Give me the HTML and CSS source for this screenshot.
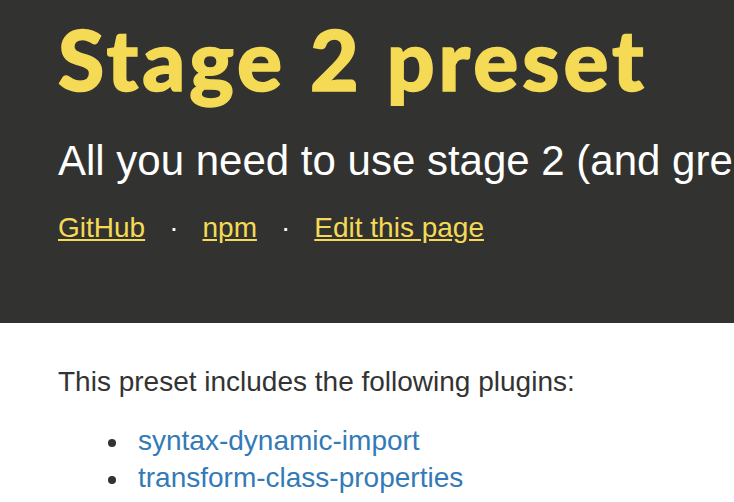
FILE: index.html
```html
<!DOCTYPE html>
<html lang="en">
<head>
<meta charset="utf-8">
<title>Stage 2 preset</title>
<link rel="stylesheet" href="styles.css">
</head>
<body>
<header class="hero">
  <h1 class="hero-title">Stage 2 preset</h1>
  <p class="hero-lead">All you need to use stage 2 (and greater) plugins</p>
  <div class="hero-links"><a href="#">GitHub</a><span class="sep">&middot;</span><a href="#">npm</a><span class="sep">&middot;</span><a href="#">Edit this page</a></div>
</header>
<main class="content">
  <p>This preset includes the following plugins:</p>
  <ul class="plugins">
    <li><a href="#">syntax-dynamic-import</a></li>
    <li><a href="#">transform-class-properties</a></li>
  </ul>
</main>
</body>
</html>
```

FILE: styles.css
```css
html {

	font-family: "Liberation Sans", Arial, Helvetica, sans-serif;
	color: #333;
	overflow: hidden;
}
body {

	margin: 0;
	font-size: 28px;
	line-height: 34px;
}
a {

	color: #337ab7;
	text-decoration: none;
}

/* header */
.hero {

	background: #323330;
	padding: 17px 58px 78px;
	white-space: nowrap;
}
.hero-title {

	margin: 0;
	font-family: Lato, "Noto Sans", sans-serif;
	font-weight: 900;
	font-size: 84px;
	line-height: 84px;
	letter-spacing: 4px;
	color: #f5da55;
	-webkit-text-stroke: 1.5px #f5da55;
}
.hero-lead {

	margin: 35px 0 0;
	font-size: 42px;
	line-height: 50px;
	color: #fff;
}
.hero-links {

	margin-top: 25px;
	color: #fff;
}
.hero-links a {

	color: #f5da55;
	text-decoration: underline;
}
.hero-links .sep {

	margin: 0 24px;
}

/* body */
.content {

	padding: 0 58px;
}
.content p {

	margin: 42px 0 0;
}
.plugins {

	list-style: none;
	margin: 23px 0 0;
	padding-left: 50px;
	line-height: 37px;
}
.plugins li {

	display: flex;
	white-space: nowrap;
}
.plugins li::before {

	content: "";
	flex: none;
	width: 8px;
	height: 8px;
	margin: 17px 22px 0 0;
	border-radius: 50%;
	background: #333;
}
```
